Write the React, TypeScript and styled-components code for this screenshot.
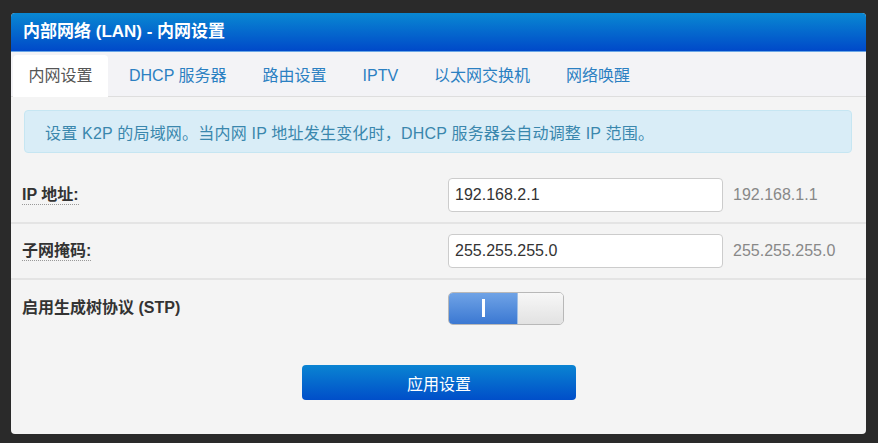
import React from "react";
import styled, { createGlobalStyle } from "styled-components";

const GlobalStyle = createGlobalStyle`
  html, body {
    margin: 0;
    background: #2a2a2a;
  }
  body {
    padding: 13px 12px 9px 11px;
    font-family: "Liberation Sans", "Noto Sans CJK SC", sans-serif;
  }
`;

const tabs = ["内网设置", "DHCP 服务器", "路由设置", "IPTV", "以太网交换机", "网络唤醒"];

const fields = [
  { label: "IP 地址:", value: "192.168.2.1", hint: "192.168.1.1" },
  { label: "子网掩码:", value: "255.255.255.0", hint: "255.255.255.0" },
];

function App() {
  return (
    <>
      <GlobalStyle />
      <Panel>
        <Header>内部网络 (LAN) - 内网设置</Header>
        <TabBar>
          {tabs.map((t, i) => (
            <Tab key={t} $active={i === 0}>
              {t}
            </Tab>
          ))}
        </TabBar>
        <Alert>设置 K2P 的局域网。当内网 IP 地址发生变化时，DHCP 服务器会自动调整 IP 范围。</Alert>
        {fields.map((f) => (
          <Row key={f.label}>
            <Label $dotted>{f.label}</Label>
            <Input defaultValue={f.value} />
            <Hint>{f.hint}</Hint>
          </Row>
        ))}
        <Row $last>
          <Label>启用生成树协议 (STP)</Label>
          <Toggle>
            <ToggleOn>
              <ToggleMark />
            </ToggleOn>
            <ToggleOff />
          </Toggle>
        </Row>
        <Footer>
          <ApplyButton>应用设置</ApplyButton>
        </Footer>
      </Panel>
    </>
  );
}

const Panel = styled.div`
  width: 855px;
  height: 421px;
  background: #f4f4f4;
  border-radius: 4px;
  overflow: hidden;
  display: flex;
  flex-direction: column;
`;

const Header = styled.div`
  height: 38px;
  line-height: 38px;
  padding-left: 12px;
  color: #fff;
  font-size: 17px;
  font-weight: bold;
  background: linear-gradient(to bottom, #0988d2, #0049c9);
  border-bottom: 1px solid #6aa6e6;
`;

const TabBar = styled.div`
  display: flex;
  gap: 6px;
  padding: 3px 2px 0;
  background: #f3f3f6;
  border-bottom: 1px solid #dedede;
  height: 41px;
`;

const Tab = styled.div<{ $active?: boolean }>`
  padding: 0 15px;
  height: 42px;
  line-height: 42px;
  font-size: 16px;
  color: ${({ $active }) => ($active ? "#555" : "#2b80c2")};
  background: ${({ $active }) => ($active ? "#fff" : "transparent")};
  border-radius: 4px 4px 0 0;
  box-sizing: border-box;
  width: ${({ $active }) => ($active ? "95px" : "auto")};
  text-align: center;
`;

const Alert = styled.div`
  margin: 13px 14px 15px 13px;
  height: 43px;
  box-sizing: border-box;
  padding-left: 20px;
  display: flex;
  align-items: center;
  font-size: 16px;
  letter-spacing: 0.2px;
  color: #3a87ad;
  background: #d9edf7;
  border: 1px solid #c6e6f2;
  border-radius: 4px;
`;

const Row = styled.div<{ $last?: boolean }>`
  display: grid;
  grid-template-columns: 426px 275px auto;
  align-items: center;
  height: 56px;
  box-sizing: border-box;
  padding-left: 11px;
  border-bottom: ${({ $last }) => ($last ? "none" : "2px solid #e4e4e4")};
`;

const Label = styled.span<{ $dotted?: boolean }>`
  justify-self: start;
  font-size: 16px;
  font-weight: bold;
  color: #333;
  border-bottom: ${({ $dotted }) => ($dotted ? "1px dotted #999" : "none")};
  line-height: 18px;
`;

const Input = styled.input`
  width: 275px;
  height: 34px;
  box-sizing: border-box;
  padding: 0 6px;
  font-family: "Liberation Sans", sans-serif;
  font-size: 16px;
  color: #333;
  background: #fff;
  border: 1px solid #ccc;
  border-radius: 4px;
  outline: none;
`;

const Hint = styled.span`
  margin-left: 10px;
  font-size: 16px;
  color: #888;
`;

const Toggle = styled.div`
  display: flex;
  width: 116px;
  height: 33px;
  box-sizing: border-box;
  border: 1px solid #b8b8b8;
  border-radius: 5px;
  overflow: hidden;
`;

const ToggleOn = styled.div`
  width: 68px;
  display: flex;
  align-items: center;
  justify-content: center;
  background: linear-gradient(to bottom, #6fa3e6, #3b78d2);
  border-right: 1px solid #9fbfe6;
`;

const ToggleMark = styled.div`
  width: 3px;
  height: 18px;
  background: #fff;
`;

const ToggleOff = styled.div`
  flex: 1;
  background: linear-gradient(to bottom, #f7f7f7, #e2e2e2);
`;

const Footer = styled.div`
  display: flex;
  padding: 29px 0 0 291px;
`;

const ApplyButton = styled.button`
  width: 274px;
  height: 35px;
  border: none;
  border-radius: 4px;
  color: #fff;
  font-family: "Liberation Sans", "Noto Sans CJK SC", sans-serif;
  font-size: 16px;
  background: linear-gradient(to bottom, #0a84d2, #004ec9);
  cursor: pointer;
`;

export default App;
